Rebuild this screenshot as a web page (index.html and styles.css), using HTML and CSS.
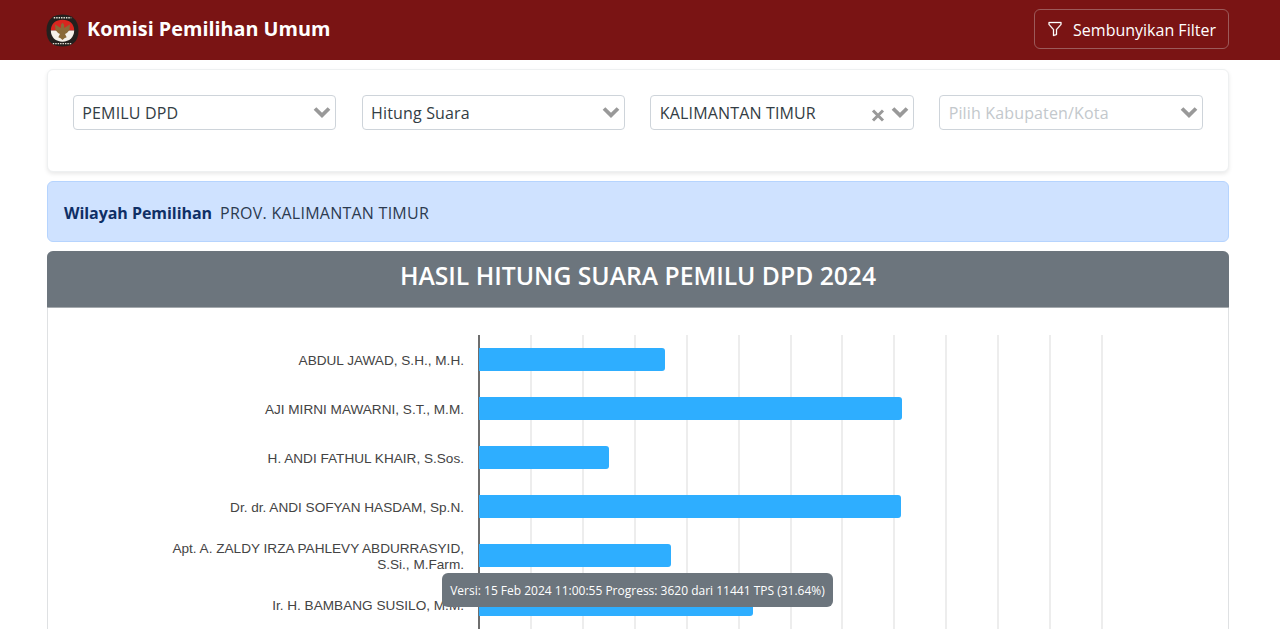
FILE: index.html
```html
<!DOCTYPE html>
<html lang="id">
<head>
<meta charset="utf-8">
<title>Komisi Pemilihan Umum</title>
<link rel="stylesheet" href="styles.css">
</head>
<body>
<nav class="navbar">
  <a class="brand">
    <svg class="logo" width="33" height="33" viewBox="0 0 34 34" aria-hidden="true">
      <path d="M17 .5C25 .5 33.500 4.500 33.500 17S26 33.500 17 33.500 .5 29.500 .5 17 9 .5 17 .5Z" fill="#23201e"/>
      <path d="M5 17C5 10 10 6 17 6S29 10 29 17Z" fill="#d8261f"/>
      <path d="M5 17H29C29 24 24 28.500 17 28.500S5 24 5 17Z" fill="#f4f1ea"/>
      <path d="M17 9l1.600 2 .2 3.500 6-3.900-.6 6-2.600 3-2 1 1.700 3.400-2.300 1-2 1.800-2-1.800-2.300-1 1.700-3.400-2-1-2.600-3-.6-6 6 3.900.2-3.500Z" fill="#8a6a38"/>
      <path d="M8 3.800h18M7 30.500h20" stroke="#e4dfd3" stroke-width="1.500" stroke-dasharray="1.500 1"/>
    </svg>
    <span>Komisi Pemilihan Umum</span>
  </a>
  <button class="filter-btn" type="button">
    <svg width="16" height="16" viewBox="0 0 16 16" fill="#fff" stroke="#fff" stroke-width=".3" aria-hidden="true">
      <path d="M1.500 1.500A.5.500 0 0 1 2 1h12a.5.500 0 0 1 .5.500v2a.5.500 0 0 1-.128.334L10 8.692V13.500a.5.500 0 0 1-.342.474l-3 1A.5.500 0 0 1 6 14.500V8.692L1.628 3.834A.5.500 0 0 1 1.500 3.500v-2zm1 .500v1.308l4.372 4.858A.5.500 0 0 1 7 8.500v5.306l2-.666V8.500a.5.500 0 0 1 .128-.334L13.500 3.308V2h-11z"/>
    </svg>
    <span>Sembunyikan Filter</span>
  </button>
</nav>

<main class="container">
  <section class="filter-card">
    <div class="select"><span class="value">PEMILU DPD</span><svg class="chev" width="20" height="20" viewBox="0 0 20 20"><path d="M3 6.500l7 6.800 7-6.800" /></svg></div>
    <div class="select"><span class="value">Hitung Suara</span><svg class="chev" width="20" height="20" viewBox="0 0 20 20"><path d="M3 6.500l7 6.800 7-6.800" /></svg></div>
    <div class="select"><span class="value">KALIMANTAN TIMUR</span><svg class="clear" width="14" height="14" viewBox="0 0 14 14"><path d="M2 2.500l10 10M12 2.500l-10 10"/></svg><svg class="chev" width="20" height="20" viewBox="0 0 20 20"><path d="M3 6.500l7 6.800 7-6.800" /></svg></div>
    <div class="select placeholder"><span class="value">Pilih Kabupaten/Kota</span><svg class="chev" width="20" height="20" viewBox="0 0 20 20"><path d="M3 6.500l7 6.800 7-6.800" /></svg></div>
  </section>

  <section class="alert"><strong>Wilayah Pemilihan</strong><span>PROV. KALIMANTAN TIMUR</span></section>

  <section class="result-card">
    <h1 class="result-head">HASIL HITUNG SUARA PEMILU DPD 2024</h1>
    <div class="chart">
      <div class="grid">
        <i></i><i></i><i></i><i></i><i></i><i></i><i></i><i></i><i></i><i></i><i></i><i></i>
      </div>
      <div class="row"><div class="label">ABDUL JAWAD, S.H., M.H.</div><div class="track"><div class="bar" style="width:186px"></div></div></div>
      <div class="row"><div class="label">AJI MIRNI MAWARNI, S.T., M.M.</div><div class="track"><div class="bar" style="width:423px"></div></div></div>
      <div class="row"><div class="label">H. ANDI FATHUL KHAIR, S.Sos.</div><div class="track"><div class="bar" style="width:130px"></div></div></div>
      <div class="row"><div class="label">Dr. dr. ANDI SOFYAN HASDAM, Sp.N.</div><div class="track"><div class="bar" style="width:422px"></div></div></div>
      <div class="row"><div class="label">Apt. A. ZALDY IRZA PAHLEVY ABDURRASYID, S.Si., M.Farm.</div><div class="track"><div class="bar" style="width:192px"></div></div></div>
      <div class="row"><div class="label">Ir. H. BAMBANG SUSILO, M.M.</div><div class="track"><div class="bar" style="width:274px"></div></div></div>
    </div>
  </section>
</main>
<div class="tooltip">Versi: 15 Feb 2024 11:00:55 Progress: 3620 dari 11441 TPS (31.64%)</div>
</body>
</html>
```
FILE: styles.css
```css
* { box-sizing: border-box; }
html, body { margin: 0; height: 629px; overflow: hidden; background: #fff; }
body { font-family: "Open Sans", "Noto Sans", sans-serif; color: #212529; position: relative; }

.navbar {
  height: 60px;
  background: #7a1414;
  padding: 0 51px 0 46px;
  display: flex;
  align-items: center;
  justify-content: space-between;
}
.brand { display: flex; align-items: center; gap: 8px; color: #fff; font-size: 19.800px; font-weight: 700; }
.brand span { margin-top: -3px; }
.logo { display: block; flex: none; }
.filter-btn {
  width: 195px;
  height: 40px;
  margin-top: -2px;
  padding-top: 2px;
  display: flex;
  align-items: center;
  justify-content: center;
  gap: 10px;
  background: transparent;
  color: #fff;
  border: 1px solid #9c5a5a;
  border-radius: 6px;
  font: 400 16px "Open Sans", sans-serif;
}
.filter-btn svg { margin-top: -2px; }

.container { padding: 9px 51px 0 47px; display: flex; flex-direction: column; gap: 9px; }

.filter-card {
  height: 103px;
  background: #fff;
  border: 1px solid #eef0f1;
  border-radius: 6px;
  box-shadow: 0 2px 4px rgba(0,0,0,.09);
  padding: 25px 0 0 24.800px;
  display: grid;
  grid-template-columns: repeat(4, 263.600px);
  column-gap: 25.200px;
  align-items: start;
}
.select {
  height: 35px;
  border: 1px solid #ced4da;
  border-radius: 4px;
  padding: 0 3px 0 8.500px;
  display: flex;
  align-items: center;
  font-size: 16px;
  letter-spacing: .15px;
  color: #333d44;
  background: #fff;
}
.select .value { flex: 1; }
.select.placeholder .value { color: #c3c8cc; }
.chev { fill: none; stroke: #999; stroke-width: 3.800; margin-top: -1px; }
.clear { fill: none; stroke: #999; stroke-width: 3; margin-top: 5px; margin-right: 5px; }

.alert {
  height: 61px;
  background: #cfe2ff;
  border: 1px solid #b6d4fe;
  border-radius: 6px;
  padding: 2px 16px 0;
  display: flex;
  align-items: center;
  gap: 8px;
  font-size: 16px;
  color: #2c3a4f;
}
.alert strong { color: #0f2f66; font-weight: 700; letter-spacing: -.05px; }
.alert span { letter-spacing: .25px; }

.result-card {
  height: 400px;
  border: 1px solid #dfe1e3;
  border-radius: 6px 6px 0 0;
}
.result-head {
  height: 57px;
  margin: -1px -1px 0;
  padding-bottom: 7px;
  background: #6c757d;
  color: #fff;
  border-radius: 6px 6px 0 0;
  border-bottom: 1px solid #a5aaae;
  font-size: 24.700px;
  font-weight: 600;
  display: flex;
  align-items: center;
  justify-content: center;
}
.chart { position: relative; padding: 27px 0 0 431px; }
.grid {
  position: absolute;
  top: 27px;
  bottom: -400px;
  left: 430px;
  width: 625px;
  display: flex;
  border-left: 2px solid #6e6e6e;
}
.grid i { flex: 1; border-right: 2px solid #ededed; }
.row { position: relative; height: 49px; display: flex; align-items: center; }
.label {
  position: absolute;
  right: 100%;
  margin-right: 15px;
  width: 310px;
  padding-top: 3px;
  text-align: right;
  font: 13.600px/16px "Liberation Sans", Arial, sans-serif;
  color: #444;
}
.track { flex: 1; }
.bar { height: 23px; background: #2eaeff; border-radius: 0 3px 3px 0; }

.tooltip {
  position: absolute;
  left: 442px;
  top: 573px;
  width: 391px;
  height: 34px;
  background: #6c757d;
  color: #fff;
  border-radius: 6px;
  font-size: 12px;
  white-space: nowrap;
  display: flex;
  align-items: center;
  justify-content: center;
}
```
